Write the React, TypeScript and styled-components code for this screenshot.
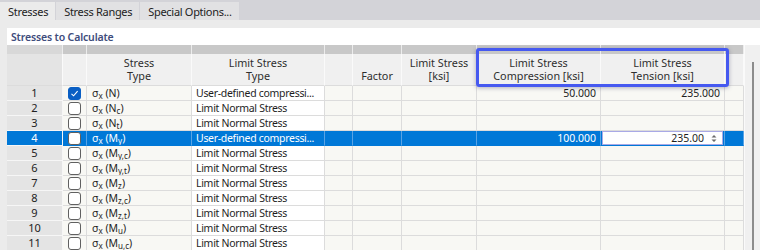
import styled, { createGlobalStyle, css } from "styled-components";

const GlobalStyle = createGlobalStyle`
  html, body {
    margin: 0;
    padding: 0;
    background: #ebebeb;
  }
  * {
    box-sizing: border-box;
  }
`;

const FONT = `"Noto Sans", "Open Sans", "DejaVu Sans", sans-serif`;

const COLS = [56, 24, 105, 133, 28, 49, 75, 124, 124, 19];

type Row = {
  n: number;
  checked?: boolean;
  selected?: boolean;
  base: string;
  sub: string;
  limit: string;
  comp?: string;
  ten?: string;
  editing?: boolean;
};

const rows: Row[] = [
  { n: 1, checked: true, base: "N", sub: "", limit: "User-defined compressi...", comp: "50.000", ten: "235.000" },
  { n: 2, base: "N", sub: "c", limit: "Limit Normal Stress" },
  { n: 3, base: "N", sub: "t", limit: "Limit Normal Stress" },
  { n: 4, selected: true, base: "M", sub: "y", limit: "User-defined compressi...", comp: "100.000", ten: "235.00", editing: true },
  { n: 5, base: "M", sub: "y,c", limit: "Limit Normal Stress" },
  { n: 6, base: "M", sub: "y,t", limit: "Limit Normal Stress" },
  { n: 7, base: "M", sub: "z", limit: "Limit Normal Stress" },
  { n: 8, base: "M", sub: "z,c", limit: "Limit Normal Stress" },
  { n: 9, base: "M", sub: "z,t", limit: "Limit Normal Stress" },
  { n: 10, base: "M", sub: "u", limit: "Limit Normal Stress" },
  { n: 11, base: "M", sub: "u,c", limit: "Limit Normal Stress" },
];

const headers = [
  "",
  "",
  "Stress\nType",
  "Limit Stress\nType",
  "",
  "Factor",
  "Limit Stress\n[ksi]",
  "Limit Stress\nCompression [ksi]",
  "Limit Stress\nTension [ksi]",
  "",
];

export default function App() {
  return (
    <Page>
      <GlobalStyle />
      <TabBar>
        <Tab $active>Stresses</Tab>
        <Tab>Stress Ranges</Tab>
        <Tab>Special Options...</Tab>
      </TabBar>
      <Body>
        <Title>Stresses to Calculate</Title>
        <TableWrap>
          <Grid>
            {COLS.map((_, i) => (
              <GroupCell key={"g" + i} $num={i === 0} />
            ))}
            {headers.map((h, i) => (
              <HeadCell key={"h" + i} $num={i === 0}>
                {h}
              </HeadCell>
            ))}
            {rows.map((r) => (
              <RowCells key={r.n} row={r} />
            ))}
          </Grid>
          <Scrollbar>
            <Thumb />
          </Scrollbar>
          <Highlight />
        </TableWrap>
      </Body>
    </Page>
  );
}

function RowCells({ row }: { row: Row }) {
  const sel = !!row.selected;
  return (
    <>
      <NumCell $sel={sel}>{row.n}</NumCell>
      <Cell $sel={sel} $center>
        <Check $checked={row.checked}>
          {row.checked && (
            <svg width="9" height="9" viewBox="0 0 9 9">
              <path d="M1.5 4.8 L3.6 6.8 L7.6 2.2" fill="none" stroke="#fff" strokeWidth="1.1" />
            </svg>
          )}
        </Check>
      </Cell>
      <Cell $sel={sel}>
        <TypeText>
          σ<Sub>x</Sub> ({row.base}
          {row.sub && <Sub>{row.sub}</Sub>})
        </TypeText>
      </Cell>
      <Cell $sel={sel} $white>
        <LimitText>{row.limit}</LimitText>
      </Cell>
      <Cell $sel={sel} />
      <Cell $sel={sel} />
      <Cell $sel={sel} />
      <Cell $sel={sel} $right>
        {row.comp}
      </Cell>
      {row.editing ? (
        <Cell $sel={sel}>
          <Editor>
            <span>{row.ten}</span>
            <Spinner>
              <svg width="6" height="9" viewBox="0 0 6 9">
                <path d="M0.5 3.5 L3 1 L5.5 3.5 Z M0.5 5.5 L3 8 L5.5 5.5 Z" fill="#6a6a6a" />
              </svg>
            </Spinner>
          </Editor>
        </Cell>
      ) : (
        <Cell $sel={sel} $right>
          {row.ten}
        </Cell>
      )}
      <Cell $sel={sel} />
    </>
  );
}

const Page = styled.div`
  width: 760px;
  height: 250px;
  overflow: hidden;
  background: #ebebeb;
  font-family: ${FONT};
  font-size: 10.5px;
  color: #1e1e1e;
`;

const TabBar = styled.div`
  display: flex;
  gap: 1px;
  height: 20px;
  padding-top: 2px;
  background: #d3d3d8;
`;

const Tab = styled.div<{ $active?: boolean }>`
  display: flex;
  align-items: center;
  padding: 0 7px 0 8px;
  font-size: 11px;
  letter-spacing: -0.3px;
  color: #222;
  background: ${(p) => (p.$active ? "#ebebeb" : "#e1e1e3")};
`;

const Body = styled.div`
  padding: 8px 0 0 7px;
`;

const Title = styled.div`
  height: 17px;
  background: #fff;
  padding-left: 4px;
  display: flex;
  align-items: center;
  font-size: 10.5px;
  font-weight: 600;
  letter-spacing: -0.15px;
  color: #3e4c7c;
`;

const TableWrap = styled.div`
  position: relative;
  display: flex;
`;

const Grid = styled.div`
  display: grid;
  grid-template-columns: ${COLS.map((c) => c + "px").join(" ")};
  grid-template-rows: 9px 32px repeat(11, 15px);
`;

const GroupCell = styled.div<{ $num?: boolean }>`
  background: ${(p) => (p.$num ? "#d8d8d8" : "#c8c8c8")};
  border-right: 1px solid #ececec;
`;

const HeadCell = styled.div<{ $num?: boolean }>`
  background: ${(p) => (p.$num ? "#e4e4e4" : "#f0f0f0")};
  border-right: 1px solid #fafafa;
  border-bottom: 1px solid #dcdcdc;
  display: flex;
  align-items: flex-end;
  justify-content: center;
  text-align: center;
  white-space: pre-line;
  font-size: 10.8px;
  line-height: 12.5px;
  padding-bottom: 3px;
  color: #2e2e2e;
`;

const rowBase = css`
  display: flex;
  align-items: center;
  overflow: hidden;
  white-space: nowrap;
  line-height: 14px;
`;

const NumCell = styled.div<{ $sel?: boolean }>`
  ${rowBase};
  justify-content: center;
  font-size: 11px;
  background: ${(p) => (p.$sel ? "#0078d7" : "#e4e4e4")};
  color: ${(p) => (p.$sel ? "#fff" : "#222")};
  border-bottom: 1px solid #f6f6f6;
  border-right: 1px solid #f6f6f6;
`;

const Cell = styled.div<{ $sel?: boolean; $white?: boolean; $right?: boolean; $center?: boolean }>`
  ${rowBase};
  padding: 0 4px 0 4px;
  justify-content: ${(p) => (p.$right ? "flex-end" : p.$center ? "center" : "flex-start")};
  background: ${(p) => (p.$sel ? "#0078d7" : p.$white ? "#ffffff" : "#f8f8f4")};
  color: ${(p) => (p.$sel ? "#fff" : "#1e1e1e")};
  border-right: 1px solid ${(p) => (p.$sel ? "#5aa3e4" : "#dcdcdc")};
  border-bottom: 1px solid ${(p) => (p.$sel ? "#0078d7" : "#dcdcdc")};
`;

const LimitText = styled.span`
  letter-spacing: -0.3px;
`;

const TypeText = styled.span`
  padding-left: 1px;
`;

const Sub = styled.sub`
  font-size: 8px;
  vertical-align: -2px;
  line-height: 0;
`;

const Check = styled.span<{ $checked?: boolean }>`
  width: 13px;
  height: 13px;
  border-radius: 3px;
  border: 1px solid ${(p) => (p.$checked ? "#0a5fc4" : "#606060")};
  background: ${(p) => (p.$checked ? "#0a5fc4" : "#fff")};
  display: flex;
  align-items: center;
  justify-content: center;
`;

const Editor = styled.div`
  flex: 1;
  height: 14px;
  margin: 0 -3px;
  background: #fff;
  border: 1px solid #a9a9e6;
  color: #1e1e1e;
  display: flex;
  align-items: center;
  justify-content: flex-end;
  padding-right: 4px;
  gap: 5px;
`;

const Spinner = styled.span`
  display: flex;
  align-items: center;
  width: 9px;
  justify-content: center;
`;

const Scrollbar = styled.div`
  width: 16px;
  background: #f0f0f0;
  border-left: 1px solid #fafafa;
  padding: 17px 0 0 7px;
`;

const Thumb = styled.div`
  width: 2px;
  height: 100%;
  background: #8c8c8c;
`;

const Highlight = styled.div`
  position: absolute;
  left: 469px;
  top: 3px;
  width: 253px;
  height: 39px;
  border: 3px solid #4659f0;
  border-radius: 3px;
  box-shadow: 0 1px 4px rgba(40, 40, 80, 0.35);
  pointer-events: none;
`;
